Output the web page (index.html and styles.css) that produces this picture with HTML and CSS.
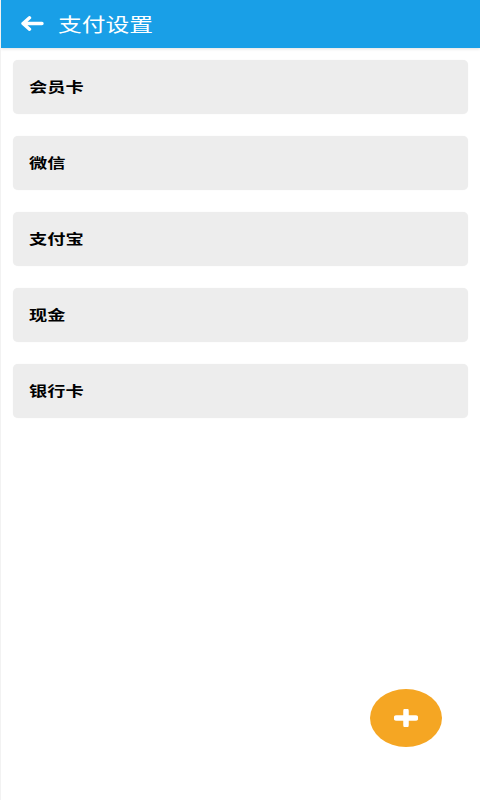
FILE: index.html
```html
<!DOCTYPE html>
<html lang="zh-CN">
<head>
<meta charset="utf-8">
<title>支付设置</title>
<link rel="stylesheet" href="styles.css">
</head>
<body>
<div class="app">
  <header class="topbar">
    <svg class="back" width="24" height="15" viewBox="0 0 24 15" aria-hidden="true">
      <path d="M22 7.5H3M9.5 1.8L3 7.5l6.5 5.7" fill="none" stroke="#fff" stroke-width="3.4" stroke-linecap="round" stroke-linejoin="round"/>
    </svg>
    <h1 class="title"><span class="wide">支付设置</span></h1>
  </header>
  <main class="list">
    <div class="item"><span class="wide">会员卡</span></div>
    <div class="item"><span class="wide">微信</span></div>
    <div class="item"><span class="wide">支付宝</span></div>
    <div class="item"><span class="wide">现金</span></div>
    <div class="item"><span class="wide">银行卡</span></div>
  </main>
  <button class="fab" aria-label="添加">
    <svg width="24" height="18" viewBox="0 0 24 18" aria-hidden="true">
      <path d="M12 2v14M2.5 9h19" stroke="#fff" stroke-width="5.5" stroke-linecap="round"/>
    </svg>
  </button>
</div>
</body>
</html>
```
FILE: styles.css
```css
html, body {
  margin: 0;
  padding: 0;
  background: #ffffff;
}
body {
  font-family: "Noto Sans CJK SC", "Noto Sans", sans-serif;
}
.app {
  position: relative;
  width: 480px;
  height: 800px;
  overflow: hidden;
  background: #fff;
  border-left: 1px solid #f2f2f2;
  box-sizing: border-box;
}
.wide {
  display: inline-block;
  transform-origin: left center;
}
.topbar {
  height: 48px;
  background: #199fe7;
  display: flex;
  align-items: center;
  padding-left: 19px;
  box-shadow: 0 1px 3px rgba(0,0,0,0.12);
}
.back {
  display: block;
  margin-top: -2px;
}
.title {
  margin: -2px 0 0 14px;
  color: #fff;
  font-size: 19px;
  font-weight: 400;
  line-height: 1;
}
.title .wide {
  transform: scaleX(1.25);
}
.list {
  display: flex;
  flex-direction: column;
  gap: 22px;
  padding: 12px 12px 0 12px;
}
.item {
  height: 54px;
  background: #ededed;
  border-radius: 5px;
  display: flex;
  align-items: center;
  padding-left: 16px;
  font-size: 14px;
  font-weight: 700;
  color: #000;
  box-shadow: 0 0 1px rgba(0,0,0,0.08);
}
.item .wide {
  transform: scaleX(1.3);
  margin-top: -2px;
}
.fab {
  position: absolute;
  left: 369px;
  top: 689px;
  width: 72px;
  height: 58px;
  border-radius: 50%;
  background: #f5a623;
  border: none;
  padding: 0;
  display: flex;
  align-items: center;
  justify-content: center;
}
```
